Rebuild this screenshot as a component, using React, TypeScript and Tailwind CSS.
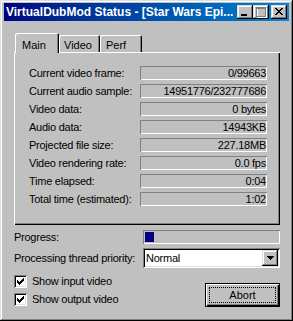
import React from 'react';

const rows: [string, string][] = [
  ['Current video frame:', '0/99663'],
  ['Current audio sample:', '14951776/232777686'],
  ['Video data:', '0 bytes'],
  ['Audio data:', '14943KB'],
  ['Projected file size:', '227.18MB'],
  ['Video rendering rate:', '0.0 fps'],
  ['Time elapsed:', '0:04'],
  ['Total time (estimated):', '1:02'],
];

const raised = 'shadow-[inset_-1px_-1px_#000,inset_1px_1px_#dfdfdf,inset_-2px_-2px_#808080,inset_2px_2px_#fff]';
const sunken = 'shadow-[inset_1px_1px_#808080,inset_-1px_-1px_#fff,inset_2px_2px_#000,inset_-2px_-2px_#dfdfdf]';

// classic 7x7 check glyph
const CHECK = [[6, 0], [5, 1], [6, 1], [0, 2], [4, 2], [5, 2], [6, 2], [0, 3], [1, 3], [3, 3], [4, 3], [5, 3], [0, 4], [1, 4], [2, 4], [3, 4], [4, 4], [1, 5], [2, 5], [3, 5], [2, 6]];

function Checkbox({ label }: { label: string }) {
  return (
    <div className="flex items-center h-[13px] gap-[5px]">
      <div className={`w-[13px] h-[13px] bg-white ${sunken} flex items-center justify-center`}>
        <svg width="7" height="7" shapeRendering="crispEdges">
          {CHECK.map(([x, y]) => <rect key={`${x}-${y}`} x={x} y={y} width="1" height="1" fill="#000" />)}
        </svg>
      </div>
      <span>{label}</span>
    </div>
  );
}

function TitleButton({ children, className = '' }: { children: React.ReactNode; className?: string }) {
  return (
    <div className={`w-[16px] h-[14px] bg-[#c0c0c0] ${raised} relative ${className}`}>
      {children}
    </div>
  );
}

export default function App() {
  return (
    <div className="w-[293px] h-[321px] bg-[#c0c0c0] pt-[3px] px-[4px] text-black text-[11px] tracking-[-0.25px] font-['Liberation_Sans',Arial,sans-serif] shadow-[inset_-1px_-1px_#000,inset_1px_1px_#dfdfdf,inset_-2px_-2px_#808080,inset_2px_2px_#fff] overflow-hidden">
      {/* Title bar */}
      <div className="h-[18px] flex items-center bg-gradient-to-r from-[#000080] to-[#1084d0] pl-[2px] pr-[2px]">
        <span className="flex-1 text-white font-bold text-[12px] tracking-normal whitespace-nowrap overflow-hidden">
          VirtualDubMod Status - [Star Wars Epi...
        </span>
        <TitleButton>
          <div className="absolute left-[4px] top-[9px] w-[6px] h-[2px] bg-black" />
        </TitleButton>
        <TitleButton>
          <svg width="16" height="14" shapeRendering="crispEdges" className="absolute inset-0">
            <rect x="4" y="3" width="9" height="9" fill="none" stroke="#fff" strokeWidth="1" transform="translate(0.5 0.5)" />
            <rect x="3" y="2" width="9" height="9" fill="none" stroke="#808080" strokeWidth="1" transform="translate(0.5 0.5)" />
            <rect x="3" y="3" width="9" height="1" fill="#808080" />
          </svg>
        </TitleButton>
        <TitleButton className="ml-[2px]">
          <svg width="16" height="14" shapeRendering="crispEdges" className="absolute inset-0">
            <path d="M4 3h2v1h1v1h2v-1h1v-1h2v1h-1v1h-1v1h-1v1h1v1h1v1h1v1h-2v-1h-1v-1h-2v1h-1v1h-2v-1h1v-1h1v-1h1v-1h-1v-1h-1v-1h-1z" fill="#000" />
          </svg>
        </TitleButton>
      </div>

      {/* Body */}
      <div className="pl-[10px] pr-[9px]">
        {/* Tabs */}
        <div className="mt-[12px] ml-[1px] h-[19px] flex items-end">
          <div className="relative z-10 -mb-[1px] w-[44px] h-[20px] bg-[#c0c0c0] rounded-t-[2px] shadow-[inset_1px_1px_#fff,inset_-1px_0_#000,inset_-2px_0_#808080] pl-[7px] pt-[4px] tracking-normal">
            Main
          </div>
          <div className="w-[41px] h-[17px] rounded-t-[2px] shadow-[inset_1px_1px_#fff,inset_-1px_0_#000,inset_-2px_0_#808080] pl-[5px] pt-[2px] tracking-normal">
            Video
          </div>
          <div className="w-[42px] h-[17px] rounded-t-[2px] shadow-[inset_1px_1px_#fff,inset_-1px_0_#000,inset_-2px_0_#808080] pl-[6px] pt-[2px] tracking-normal">
            Perf
          </div>
        </div>

        {/* Tab panel */}
        <div className="h-[173px] shadow-[inset_1px_1px_#fff,inset_-1px_-1px_#000,inset_-2px_-2px_#808080] pt-[14px] pl-[15px]">
          <div className="flex flex-col gap-[4px]">
            {rows.map(([label, value]) => (
              <div key={label} className="flex items-center h-[14px]">
                <span className="w-[111px] whitespace-nowrap">{label}</span>
                <div className="w-[127px] h-[14px] leading-[14px] text-right pr-[1px] shadow-[inset_1px_1px_#808080,inset_-1px_-1px_#fff] whitespace-nowrap">
                  {value}
                </div>
              </div>
            ))}
          </div>
        </div>

        {/* Progress */}
        <div className="mt-[5px] flex items-center justify-between h-[14px]">
          <span>Progress:</span>
          <div className="w-[137px] h-[14px] p-[2px] shadow-[inset_1px_1px_#808080,inset_-1px_-1px_#fff]">
            <div className="w-[9px] h-full bg-[#000080]" />
          </div>
        </div>

        {/* Priority */}
        <div className="mt-[4px] flex items-center justify-between h-[20px]">
          <span>Processing thread priority:</span>
          <div className={`w-[137px] h-[20px] bg-white ${sunken} flex items-center pl-[3px] pr-[2px]`}>
            <span className="flex-1">Normal</span>
            <div className={`w-[16px] h-[16px] bg-[#c0c0c0] ${raised} flex items-center justify-center`}>
              <svg width="7" height="4" shapeRendering="crispEdges">
                <path d="M0 0h7v1h-1v1h-1v1h-1v1h-1v-1h-1v-1h-1v-1h-1z" fill="#000" />
              </svg>
            </div>
          </div>
        </div>

        {/* Checkboxes + Abort */}
        <div className="mt-[7px] flex justify-between">
          <div className="flex flex-col gap-[5px]">
            <Checkbox label="Show input video" />
            <Checkbox label="Show output video" />
          </div>
          <div className="mt-[8px] w-[75px] h-[24px] border border-black relative">
            <div className="absolute inset-0 shadow-[inset_1px_1px_#fff,inset_-1px_-1px_#000,inset_-2px_-2px_#808080] flex items-center justify-center tracking-normal">
              Abort
            </div>
            <div className="absolute inset-[3px] border border-dotted border-black" />
          </div>
        </div>
      </div>
    </div>
  );
}
